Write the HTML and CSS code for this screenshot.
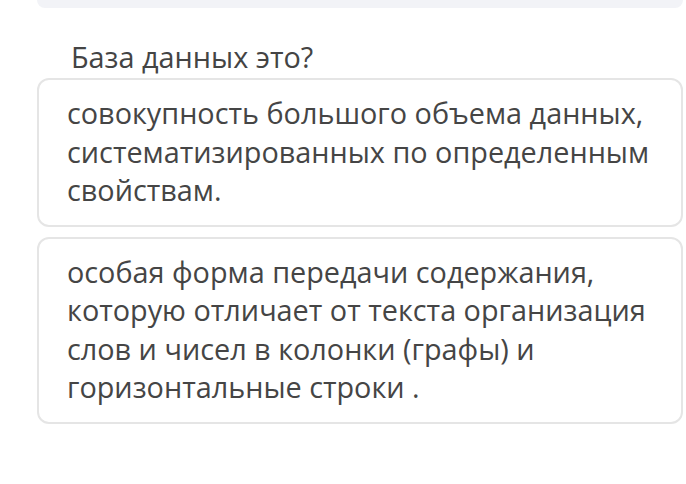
FILE: index.html
```html
<!DOCTYPE html>
<html lang="ru">
<head>
<meta charset="utf-8">
<link rel="stylesheet" href="styles.css">
</head>
<body>
<div class="page">
  <div class="topbar"></div>
  <div class="question">База данных это?</div>
  <div class="options">
    <div class="option">совокупность большого объема данных, систематизированных по определенным свойствам.</div>
    <div class="option">особая форма передачи содержания, которую отличает от текста организация слов и чисел в колонки (графы) и горизонтальные строки .</div>
  </div>
</div>
</body>
</html>
```

FILE: styles.css
```css
html, body {
  margin: 0;
  padding: 0;
  background: #ffffff;
}
body {
  font-family: "Open Sans", "Noto Sans", sans-serif;
  color: #454545;
}
.page {
  width: 646px;
  margin-left: 37px;
}
.topbar {
  height: 8px;
  background: #f2f3f7;
  border-radius: 0 0 10px 10px;
}
.question {
  margin-top: 30px;
  padding-left: 34px;
  font-size: 28.8px;
  line-height: 38px;
  color: #444;
}
.options {
  margin-top: 2px;
  display: flex;
  flex-direction: column;
  gap: 10px;
}
.option {
  border: 2px solid #e5e5e5;
  border-radius: 12px;
  padding: 14px 20px 15px 28px;
  font-size: 28.8px;
  line-height: 38.5px;
  color: #454545;
}
```
